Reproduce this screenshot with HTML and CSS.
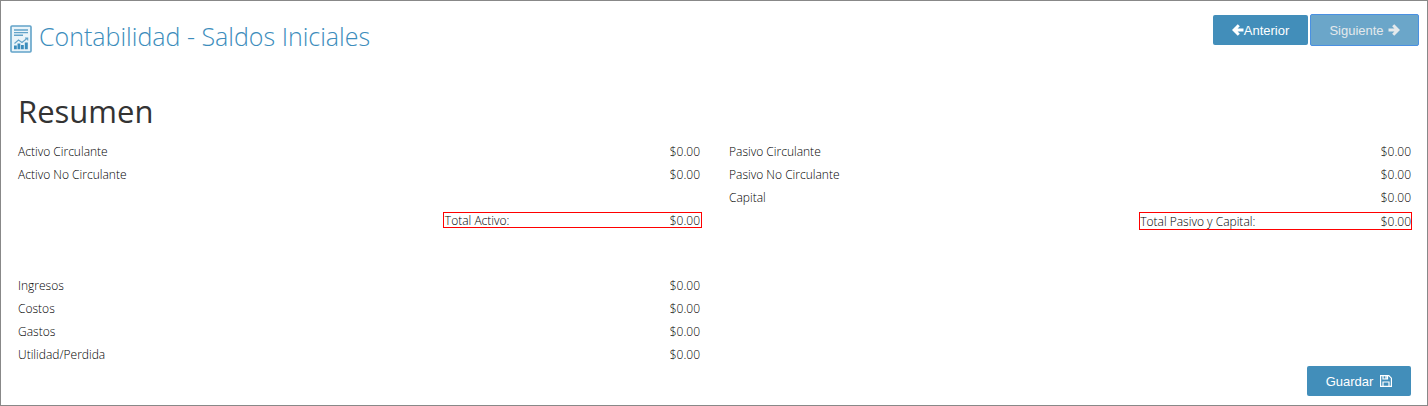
FILE: index.html
```html
<!DOCTYPE html>
<html lang="es">

<head>
    <meta charset="UTF-8">
    <link rel="stylesheet" href="styles.css">
    <title>Contabilidad - Saldos Iniciales</title>
    <meta name="viewport" content="width=device-width, initial-scale=1">
</head>

<body>
    <div class="page">
        <header class="header">
            <h1 class="title">
                <svg class="titleIcon" viewBox="0 0 22 28" aria-hidden="true">
                    <rect x="1" y="1" width="20" height="26" rx="1" fill="#eaf4f9" stroke="#62a3c9" stroke-width="1.6" />
                    <path d="M4 5h14M4 7.6h14M4 10.2h9" stroke="#62a3c9" stroke-width="1.4" />
                    <path d="M4.5 18.5l4-3.5 3.5 2.5 5.5-4.5M15 13h2.7v2.5" fill="none" stroke="#62a3c9" stroke-width="1.1" />
                    <path d="M4 20.5h2.8v3.7H4zM7.5 18.5h2.8v5.7H7.5zM11 20h2.8v4.2H11zM14.8 17.5h3v6.7h-3z" fill="#3c8dbc" />
                </svg>
                Contabilidad - Saldos Iniciales
            </h1>
            <div class="buttonWrapper">
                <button type="button" class="button">
                    <svg class="arrow" viewBox="0 0 12 12" aria-hidden="true">
                        <path d="M11.5 6H2.5M6.8 1.2L2 6l4.8 4.8" />
                    </svg>Anterior
                </button>
                <button type="button" class="button next">
                    Siguiente
                    <svg class="arrow" viewBox="0 0 12 12" aria-hidden="true">
                        <path d="M0.5 6h9M5.2 1.2L10 6l-4.8 4.8" />
                    </svg>
                </button>
            </div>
        </header>

        <main class="summary">
            <h2>Resumen</h2>
            <div class="columns">
                <section class="column">
                    <table>
                        <tr><th scope="row">Activo Circulante</th><td>$0.00</td></tr>
                        <tr><th scope="row">Activo No Circulante</th><td>$0.00</td></tr>
                    </table>
                    <table class="total">
                        <tr><th scope="row">Total Activo:</th><td>$0.00</td></tr>
                    </table>
                </section>
                <section class="column">
                    <table>
                        <tr><th scope="row">Pasivo Circulante</th><td>$0.00</td></tr>
                        <tr><th scope="row">Pasivo No Circulante</th><td>$0.00</td></tr>
                        <tr><th scope="row">Capital</th><td>$0.00</td></tr>
                    </table>
                    <table class="total totalCapital">
                        <tr><th scope="row">Total Pasivo y Capital:</th><td>$0.00</td></tr>
                    </table>
                </section>
            </div>
            <div class="columns results">
                <section class="column">
                    <table>
                        <tr><th scope="row">Ingresos</th><td>$0.00</td></tr>
                        <tr><th scope="row">Costos</th><td>$0.00</td></tr>
                        <tr><th scope="row">Gastos</th><td>$0.00</td></tr>
                        <tr><th scope="row">Utilidad/Perdida</th><td>$0.00</td></tr>
                    </table>
                </section>
            </div>
            <div class="actions">
                <button type="button" class="button save">
                    Guardar
                    <svg class="disk" viewBox="0 0 12 12" aria-hidden="true">
                        <path d="M0.6 0.6h8.2l2.6 2.6v8.2H0.6zM3 11V7h6v4M3 1v3h4.5V1M6 1v2.5" />
                    </svg>
                </button>
            </div>
        </main>
    </div>
</body>

</html>
```
FILE: styles.css
```css
* {
    box-sizing: border-box;
}

body {
    margin: 0;
    font-family: "Open Sans", sans-serif;
    font-size: 12px;
    font-weight: 300;
    color: #000;
    background: #fff;
}

.page {
    min-height: 100vh;
    border: 1px solid #888;
    padding: 13px 8px 9px 9px;
}

.header {
    display: flex;
    justify-content: space-between;
    align-items: flex-start;
}

.title {
    display: flex;
    align-items: center;
    gap: 7px;
    margin: 4px 0 0;
    font-size: 25px;
    line-height: 36px;
    font-weight: 300;
    color: #3c8dbc;
}

.titleIcon {
    width: 22px;
    height: 28px;
    margin-top: 6px;
}

.buttonWrapper {
    display: flex;
    gap: 2px;
}

.button {
    display: flex;
    align-items: center;
    justify-content: center;
    width: 95px;
    height: 30px;
    margin-top: 1px;
    padding: 0;
    border: 0;
    border-radius: 2px;
    background: #428eba;
    color: #fff;
    font-family: "Liberation Sans", Arial, sans-serif;
    font-size: 13px;
    cursor: pointer;
}

.button.next {
    gap: 4px;
    width: 109px;
    height: 32px;
    margin-top: 0;
    border: 1px solid #4a90e2;
    background: #6ba6c9;
    color: #e4e9ec;
}

.button.save {
    gap: 7px;
    width: 104px;
    margin-top: 0;
}

.arrow,
.disk {
    width: 12px;
    height: 12px;
    fill: none;
    stroke: currentColor;
}

.arrow {
    stroke-width: 3;
}

.disk {
    stroke-width: 1.2;
}

.summary {
    padding: 0 8px;
}

h2 {
    margin: 34px 0 6px;
    font-size: 31px;
    line-height: 46px;
    font-weight: 400;
    color: #333;
}

.columns {
    display: grid;
    grid-template-columns: 1fr 1fr;
    column-gap: 29px;
}

.column {
    display: flex;
    flex-direction: column;
    justify-content: space-between;
}

table {
    width: 100%;
    border-collapse: collapse;
}

th,
td {
    height: 23px;
    padding: 0;
    font-weight: 300;
    text-align: left;
}

td {
    text-align: right;
}

.total {
    width: 38%;
    margin: 4px -2px 4px auto;
    border: 1px solid #f00;
    border-collapse: separate;
    border-spacing: 0;
}

.total th,
.total td {
    height: 14px;
    padding: 1px 1px 0;
    line-height: 13px;
}

.totalCapital {
    width: 40%;
    margin: 3px -1px 2px auto;
}

.totalCapital th,
.totalCapital td {
    height: 16px;
    padding: 0;
}

.results {
    margin-top: 42px;
}

.actions {
    display: flex;
    justify-content: flex-end;
}
```
